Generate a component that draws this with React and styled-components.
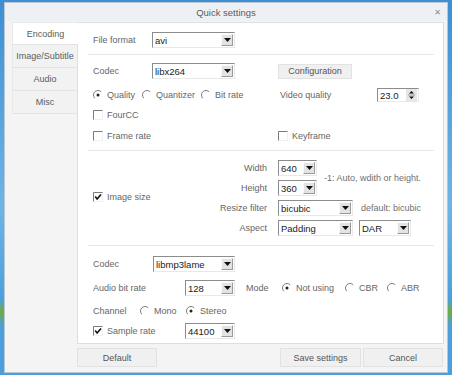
import React from "react";
import styled, { createGlobalStyle } from "styled-components";

const GlobalStyle = createGlobalStyle`
  html, body { margin: 0; padding: 0; }
  body {
    font-family: "Liberation Sans", Arial, sans-serif;
    font-size: 9px;
    color: #666;
  }
  * { box-sizing: border-box; }
`;

const RadioIcon = ({ checked }) => (
  <svg width="10" height="10" viewBox="0 0 10 10">
    <circle cx="5" cy="5" r="4.5" fill="#fff" />
    <path d="M1.8 8.2 A4.5 4.5 0 0 1 8.2 1.8" stroke="#7c7c7c" strokeWidth="1" fill="none" />
    {checked && <circle cx="5" cy="5" r="1.5" fill="#222" />}
  </svg>
);

const CheckIcon = ({ checked }) => (
  <svg width="10" height="10" viewBox="0 0 10 10">
    <rect x="0.5" y="0.5" width="9" height="9" fill="#fff" stroke="#f0f0f0" />
    <path d="M0.5 9.5 V0.5 H9.5" stroke="#7c7c7c" fill="none" />
    {checked && <path d="M2.2 4.6 L4.1 6.9 L8 2.4" stroke="#111" strokeWidth="1.6" fill="none" />}
  </svg>
);

const Combo = ({ w, value }) => (
  <Field w={w}>
    <FieldText>{value}</FieldText>
    <DropBtn>
      <svg width="7" height="4" viewBox="0 0 7 4">
        <polygon points="0,0 7,0 3.5,4" fill="#111" />
      </svg>
    </DropBtn>
  </Field>
);

const Radio = ({ w, checked, children }) => (
  <Choice w={w}>
    <RadioIcon checked={checked} />
    <span>{children}</span>
  </Choice>
);

const Check = ({ w, checked, children }) => (
  <Choice w={w}>
    <CheckIcon checked={checked} />
    <span>{children}</span>
  </Choice>
);

export default function App() {
  return (
    <>
      <GlobalStyle />
      <Desktop>
        <Window>
          <TitleBar>
            <span />
            <Title>Quick settings</Title>
            <Close>✕</Close>
          </TitleBar>
          <Body>
            <TabList>
              <Tab active>Encoding</Tab>
              <Tab>Image/Subtitle</Tab>
              <Tab>Audio</Tab>
              <Tab>Misc</Tab>
            </TabList>
            <Panel>
              <Row mt={9}>
                <Label w={59}>File format</Label>
                <Combo w={83} value="avi" />
              </Row>
              <Divider mt={6} />

              <Split mt={8}>
                <Row>
                  <Label w={59}>Codec</Label>
                  <Combo w={83} value="libx264" />
                </Row>
                <Button w={74} h={15}>Configuration</Button>
              </Split>
              <Split mt={8} h={14}>
                <Row>
                  <Radio w={49} checked>Quality</Radio>
                  <Radio w={59}>Quantizer</Radio>
                  <Radio>Bit rate</Radio>
                </Row>
                <Row>
                  <Label w={99} pl={2}>Video quality</Label>
                  <Spin>
                    <FieldText>23.0</FieldText>
                    <SpinBtn>
                      <svg width="9" height="12" viewBox="0 0 9 12">
                        <polygon points="4.5,2 7,4.5 2,4.5" fill="#111" />
                        <line x1="1" y1="6" x2="8" y2="6" stroke="#999" />
                        <polygon points="2,7.5 7,7.5 4.5,10" fill="#111" />
                      </svg>
                    </SpinBtn>
                  </Spin>
                </Row>
              </Split>
              <Row mt={5} h={18}>
                <Check>FourCC</Check>
              </Row>
              <Split mt={3} h={18}>
                <Check>Frame rate</Check>
                <Check>Keyframe</Check>
              </Split>
              <Divider mt={5} />

              <SizeBlock>
                <SizeCheck>
                  <Check checked>Image size</Check>
                </SizeCheck>
                <SizeRows>
                  <PairBlock>
                    <SizeRows>
                      <Row>
                        <SideLabel>Width</SideLabel>
                        <Combo w={39} value="640" />
                      </Row>
                      <Row>
                        <SideLabel>Height</SideLabel>
                        <Combo w={39} value="360" />
                      </Row>
                    </SizeRows>
                    <Hint ml={7}>-1: Auto, wdith or height.</Hint>
                  </PairBlock>
                  <Row>
                    <SideLabel>Resize filter</SideLabel>
                    <Combo w={75} value="bicubic" />
                    <Hint ml={8}>default: bicubic</Hint>
                  </Row>
                  <Row>
                    <SideLabel>Aspect</SideLabel>
                    <Combo w={75} value="Padding" />
                    <Gap w={6} />
                    <Combo w={52} value="DAR" />
                  </Row>
                </SizeRows>
              </SizeBlock>
              <Divider mt={9} />

              <Row mt={10}>
                <Label w={60}>Codec</Label>
                <Combo w={82} value="libmp3lame" />
              </Row>
              <Row mt={8}>
                <Label w={92}>Audio bit rate</Label>
                <Combo w={50} value="128" />
                <Label w={36} pl={11} box={47}>Mode</Label>
                <Radio w={63} checked>Not using</Radio>
                <Radio w={42}>CBR</Radio>
                <Radio>ABR</Radio>
              </Row>
              <Row mt={7}>
                <Label w={47}>Channel</Label>
                <Radio w={46}>Mono</Radio>
                <Radio checked>Stereo</Radio>
              </Row>
              <Row mt={4}>
                <Check w={92} checked>Sample rate</Check>
                <Combo w={50} value="44100" />
              </Row>
            </Panel>
          </Body>
          <Footer>
            <Button w={80} h={19}>Default</Button>
            <Button w={81} h={19} push>Save settings</Button>
            <Button w={80} h={19}>Cancel</Button>
          </Footer>
        </Window>
      </Desktop>
    </>
  );
}

const Desktop = styled.div`
  width: 452px;
  height: 375px;
  overflow: hidden;
  padding: 2px 0 0 4px;
  background: linear-gradient(180deg, #3d8fd2 0%, #6db5e6 55%, #4c9fdc 80%, #6fae3c 83%, #4c9fdc 87%);
`;

const Window = styled.div`
  width: 444px;
  height: 371px;
  background: #f4f4f4;
  border: 1px solid #b9c6d3;
  display: flex;
  flex-direction: column;
`;

const TitleBar = styled.div`
  height: 18px;
  flex: none;
  display: grid;
  grid-template-columns: 1fr auto 1fr;
  align-items: center;
  background: #eef1f4;
`;

const Title = styled.span`
  font-size: 9.5px;
  color: #5c5c5c;
`;

const Close = styled.span`
  justify-self: end;
  margin-right: 6px;
  font-family: "DejaVu Sans", sans-serif;
  font-size: 8px;
  color: #888;
`;

const Body = styled.div`
  display: flex;
  flex: none;
  padding: 1px 3px 0 7px;
`;

const TabList = styled.div`
  width: 65px;
  display: flex;
  flex-direction: column;
`;

const Tab = styled.div`
  height: 23px;
  display: flex;
  align-items: center;
  justify-content: center;
  color: #5c5c5c;
  background: ${(p) => (p.active ? "#fff" : "#f2f2f2")};
  border-left: 1px solid #e8e8e8;
  border-bottom: 1px solid #e4e4e4;
  border-top: ${(p) => (p.active ? "1px solid #e8e8e8" : "none")};
  margin-right: ${(p) => (p.active ? "-1px" : "0")};
  position: relative;
  z-index: ${(p) => (p.active ? 1 : 0)};
`;

const Panel = styled.div`
  width: 367px;
  height: 322px;
  background: #fff;
  border: 1px solid #dedede;
  padding-left: 15px;
  display: flex;
  flex-direction: column;
`;

const Row = styled.div`
  display: flex;
  align-items: center;
  height: ${(p) => p.h || 16}px;
  margin-top: ${(p) => p.mt || 0}px;
`;

const Split = styled.div`
  display: grid;
  grid-template-columns: 185px auto;
  align-items: center;
  height: ${(p) => p.h || 16}px;
  margin-top: ${(p) => p.mt || 0}px;
`;

const Divider = styled.div`
  height: 1px;
  background: #e8e8e8;
  margin: ${(p) => p.mt || 0}px 9px 0 -5px;
`;

const Label = styled.span`
  flex: none;
  width: ${(p) => (p.box || p.w)}px;
  padding-left: ${(p) => p.pl || 0}px;
  white-space: nowrap;
`;

const SideLabel = styled.span`
  flex: none;
  width: 54px;
  margin-right: 11px;
  text-align: right;
  white-space: nowrap;
`;

const Hint = styled.span`
  margin-left: ${(p) => p.ml || 0}px;
  color: #707070;
  white-space: nowrap;
`;

const Gap = styled.span`
  flex: none;
  width: ${(p) => p.w}px;
`;

const Choice = styled.span`
  flex: none;
  display: inline-flex;
  align-items: center;
  gap: 4px;
  width: ${(p) => (p.w ? `${p.w}px` : "auto")};
  white-space: nowrap;
  svg { flex: none; }
`;

const Field = styled.div`
  flex: none;
  width: ${(p) => p.w}px;
  height: 16px;
  display: flex;
  align-items: center;
  background: #fff;
  border-top: 1px solid #8c8c8c;
  border-left: 1px solid #8c8c8c;
  border-right: 1px solid #e8e8e8;
  border-bottom: 1px solid #e8e8e8;
`;

const FieldText = styled.span`
  flex: 1;
  padding-left: 2px;
  color: #222;
  font-size: 9.5px;
  white-space: nowrap;
  overflow: hidden;
`;

const DropBtn = styled.span`
  flex: none;
  width: 12px;
  height: 12px;
  margin-right: 1px;
  display: flex;
  align-items: center;
  justify-content: center;
  background: #e3e3e3;
  border-top: 1px solid #fafafa;
  border-left: 1px solid #fafafa;
  border-right: 1px solid #9a9a9a;
  border-bottom: 1px solid #9a9a9a;
`;

const Spin = styled(Field)`
  width: 42px;
  height: 14px;
`;

const SpinBtn = styled(DropBtn)`
  height: 12px;
  width: 11px;
  border: none;
  background: #e6e6e6;
`;

const SizeBlock = styled.div`
  display: flex;
  margin-top: 9px;
`;

const SizeCheck = styled.div`
  width: 120px;
  display: flex;
  align-items: center;
  padding-bottom: 2px;
`;

const SizeRows = styled.div`
  display: flex;
  flex-direction: column;
  gap: 4px;
`;

const PairBlock = styled.div`
  display: flex;
  align-items: center;
`;

const Footer = styled.div`
  display: flex;
  gap: 2px;
  padding: 4px 4px 0 72px;
`;

const Button = styled.div`
  flex: none;
  width: ${(p) => p.w}px;
  height: ${(p) => p.h}px;
  margin-left: ${(p) => (p.push ? "auto" : "0")};
  display: flex;
  align-items: center;
  justify-content: center;
  background: #f0f0f0;
  border: 1px solid #e2e2e2;
  color: #555;
  white-space: nowrap;
`;
